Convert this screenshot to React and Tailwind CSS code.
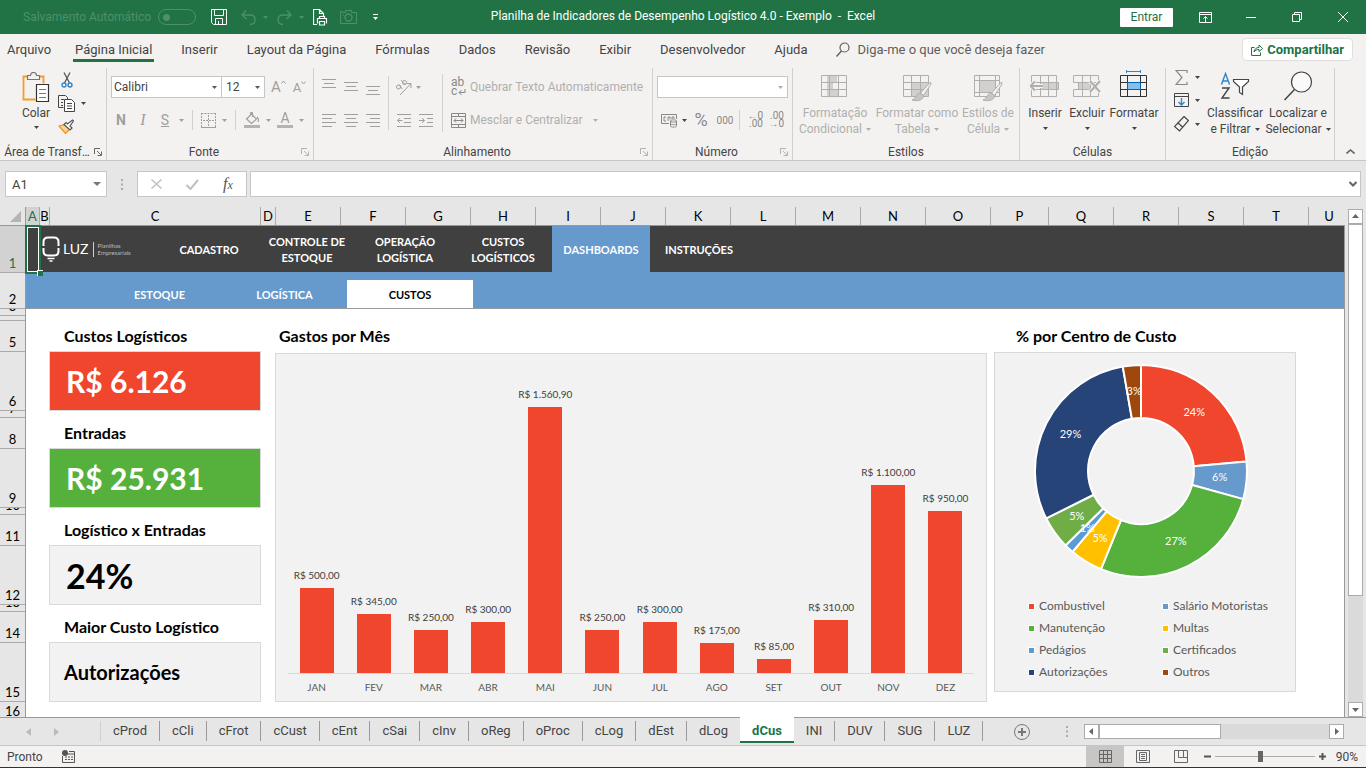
import clsx from 'clsx';

const COLUMNS = [
  { name: 'A', width: 14, active: true },
  { name: 'B', width: 10 },
  { name: 'C', width: 211 },
  { name: 'D', width: 15 },
  { name: 'E', width: 65 },
  { name: 'F', width: 65 },
  { name: 'G', width: 65 },
  { name: 'H', width: 65 },
  { name: 'I', width: 65 },
  { name: 'J', width: 65 },
  { name: 'K', width: 65 },
  { name: 'L', width: 65 },
  { name: 'M', width: 65 },
  { name: 'N', width: 65 },
  { name: 'O', width: 65 },
  { name: 'P', width: 58 },
  { name: 'Q', width: 65 },
  { name: 'R', width: 65 },
  { name: 'S', width: 65 },
  { name: 'T', width: 65 },
];

const ROWS = [
  { name: '1', height: 47, active: true },
  { name: '2', height: 36 },
  { name: '3', height: 7 },
  { name: '', height: 5 },
  { name: '5', height: 31 },
  { name: '6', height: 59 },
  { name: '7', height: 7 },
  { name: '8', height: 31 },
  { name: '9', height: 59 },
  { name: '10', height: 7 },
  { name: '11', height: 31 },
  { name: '12', height: 59 },
  { name: '13', height: 7 },
  { name: '14', height: 31 },
  { name: '15', height: 59 },
];

const MENU = ['Inserir', 'Layout da Página', 'Fórmulas', 'Dados', 'Revisão', 'Exibir', 'Desenvolvedor', 'Ajuda'];

const NAV = ['CADASTRO', 'CONTROLE DE ESTOQUE', 'OPERAÇÃO LOGÍSTICA', 'CUSTOS LOGÍSTICOS', 'DASHBOARDS', 'INSTRUÇÕES'];

const CARDS = [
  { title: 'Custos Logísticos', value: 'R$ 6.126', style: 'bg-[#f0462d] text-white text-[30px] pl-4' },
  { title: 'Entradas', value: 'R$ 25.931', style: 'bg-[#56b03c] text-white text-[30px] pl-4' },
  { title: 'Logístico x Entradas', value: '24%', style: 'bg-[#f2f2f2] text-black text-[34px] pl-4' },
  { title: 'Maior Custo Logístico', value: 'Autorizações', style: 'bg-[#f2f2f2] text-black text-[20px] pl-3.5' },
];

const MONTHS = [
  { month: 'JAN', value: 500 },
  { month: 'FEV', value: 345 },
  { month: 'MAR', value: 250 },
  { month: 'ABR', value: 300 },
  { month: 'MAI', value: 1560.9 },
  { month: 'JUN', value: 250 },
  { month: 'JUL', value: 300 },
  { month: 'AGO', value: 175 },
  { month: 'SET', value: 85 },
  { month: 'OUT', value: 310 },
  { month: 'NOV', value: 1100 },
  { month: 'DEZ', value: 950 },
];
const AXIS_MAX = 1800;

// end = angle in degrees, clockwise from the top
const SLICES = [
  { name: 'Combustível', pct: '24%', color: '#f0462d', end: 84.8 },
  { name: 'Salário Motoristas', pct: '6%', color: '#6699cc', end: 105.4 },
  { name: 'Manutenção', pct: '27%', color: '#56b03c', end: 202.2 },
  { name: 'Multas', pct: '5%', color: '#ffc000', end: 220.3 },
  { name: 'Pedágios', pct: '1%', color: '#5b9bd5', end: 225.4 },
  { name: 'Certificados', pct: '5%', color: '#70ad47', end: 243.4 },
  { name: 'Autorizações', pct: '29%', color: '#264478', end: 350.1 },
  { name: 'Outros', pct: '3%', color: '#9e480e', end: 360 },
];

const SHEETS = ['cProd', 'cCli', 'cFrot', 'cCust', 'cEnt', 'cSai', 'cInv', 'oReg', 'oProc', 'cLog', 'dEst', 'dLog', 'dCus', 'INI', 'DUV', 'SUG', 'LUZ'];

function formatBRL(v) {
  const [int, dec] = v.toFixed(2).split('.');
  return `R$ ${int.replace(/\B(?=(\d{3})+$)/g, '.')},${dec}`;
}

function Svg({ w, h, children, className, stroke = 'currentColor' }) {
  return (
    <svg width={w} height={h} viewBox={`0 0 ${w} ${h}`} fill="none" stroke={stroke} className={clsx('shrink-0', className)} aria-hidden="true">
      {children}
    </svg>
  );
}

function Caret({ className }) {
  return (
    <Svg w={5} h={3} className={className}>
      <path d="M0 0h5L2.500 3z" fill="currentColor" stroke="none" />
    </Svg>
  );
}

function TitleBar() {
  return (
    <header className="flex h-[34px] items-center bg-[#217346] text-white">
      <div className="flex flex-1 items-center">
        <label className="flex items-center pl-[23px] text-xs text-[#4d9069]">
          <span className="w-[135px] whitespace-nowrap">Salvamento Automático</span>
          <input type="checkbox" className="peer sr-only" />
          <span className="flex h-4 w-[38px] items-center rounded-full border border-[#4d9069] pl-1">
            <span className="size-[7px] rounded-full bg-[#4d9069]" />
          </span>
        </label>
        <button aria-label="Salvar" className="ml-[15px]">
          <Svg w={16} h={16}>
            <path d="M.5.5h15v15h-13l-2-2zM3.500.5v6h9v-6M4.500 15.500v-6h7v6M7.500 12v3" />
          </Svg>
        </button>
        <button aria-label="Desfazer" className="ml-[14px] flex items-center gap-[7px] text-[#4d9069]">
          <Svg w={15} h={15}>
            <path d="M5 .5 1 5l4.500 4M1 5h8.500c3 0 4.500 2 4.500 4.500 0 3-2 5-5 5" strokeWidth="1.300" />
          </Svg>
          <Caret />
        </button>
        <button aria-label="Refazer" className="ml-[9px] flex items-center gap-[7px] text-[#4d9069]">
          <Svg w={15} h={15}>
            <path d="m10 .5 4 4.500-4.500 4M14 5H5.500C2.500 5 1 7 1 9.500c0 3 2 5 5 5" strokeWidth="1.300" />
          </Svg>
          <Caret />
        </button>
        <button aria-label="Visualizar impressão" className="ml-[9px]">
          <Svg w={15} h={17}>
            <path d="M4 15.500H.5V.5h6l4 4v3M6.500.5v4h4M6.500 9.500v-2h5v2M4.500 14.500v-5h9v5M6.500 12.500h5v3.500h-5z" strokeWidth="1.200" />
          </Svg>
        </button>
        <button aria-label="Câmera" className="ml-3 text-[#4d9069]">
          <Svg w={17} h={14}>
            <path d="M.5 1.500h2v1h3v-2h6v2h5v11H.5z" />
            <circle cx="8.500" cy="7.500" r="3.500" strokeWidth="1.300" />
            <path d="M2.500 5H4" />
          </Svg>
        </button>
        <button aria-label="Personalizar" className="ml-4">
          <Svg w={5} h={6}>
            <path d="M0 .5h5" />
            <path d="M0 3h5L2.500 6z" fill="currentColor" stroke="none" />
          </Svg>
        </button>
      </div>
      <h1 className="pb-0.5 text-xs whitespace-pre">Planilha de Indicadores de Desempenho Logístico 4.0 - Exemplo  -  Excel</h1>
      <div className="flex flex-1 items-center justify-end">
        <button className="mr-[9px] h-[19px] w-[53px] rounded-[1px] bg-white text-xs text-[#217346]">Entrar</button>
        <button aria-label="Opções de exibição da faixa" className="flex w-[46px] justify-center">
          <Svg w={13} h={11}>
            <path d="M.5.5h12v10H.5zM.5 2.500h12M6.500 10V5M4.500 6.500l2-2 2 2" />
          </Svg>
        </button>
        <button aria-label="Minimizar" className="flex w-[46px] justify-center">
          <Svg w={10} h={1}>
            <path d="M0 .5h10" />
          </Svg>
        </button>
        <button aria-label="Restaurar" className="flex w-[46px] justify-center">
          <Svg w={10} h={10}>
            <path d="M.5 2.500h7v7h-7zM2.500 2.500v-2h7v7h-2" />
          </Svg>
        </button>
        <button aria-label="Fechar" className="flex w-[46px] justify-center">
          <Svg w={10} h={10}>
            <path d="m0 0 10 10M10 0 0 10" />
          </Svg>
        </button>
      </div>
    </header>
  );
}

function MenuBar() {
  return (
    <nav className="flex h-[34px] items-center bg-[#f3f2f1] pb-[3px] pl-[7px] text-[13px] text-[#444]">
      <button>Arquivo</button>
      <button className="ml-[22px] h-[25px] border-y-[3px] border-t-transparent border-b-[#217346] px-0.5">Página Inicial</button>
      <div className="ml-[27px] flex gap-[29px]">
        {MENU.map(item => (
          <button key={item}>{item}</button>
        ))}
      </div>
      <label className="ml-7 flex flex-1 items-center gap-2 text-[#605e5c]">
        <Svg w={14} h={15}>
          <circle cx="8.500" cy="5.500" r="4.500" strokeWidth="1.200" />
          <path d="M5.500 9 .5 14.500" strokeWidth="1.400" />
        </Svg>
        <input placeholder="Diga-me o que você deseja fazer" className="w-56 bg-transparent outline-none placeholder:text-[#605e5c]" />
      </label>
      <button className="mr-[13px] flex h-[23px] items-center gap-1 rounded-sm border border-[#e1dfdd] bg-white px-2 font-bold text-[#217346]">
        <Svg w={12} h={12}>
          <path d="M3.500 3.500h-3v8h9v-3M3 8c.5-3 2-4.500 5-4.500V1l3.500 3.500L8 7.500V5.500C5.500 5.500 4 6.500 3 8z" />
        </Svg>
        Compartilhar
      </button>
    </nav>
  );
}

function Group({ label, launcher, dim, className, children }) {
  return (
    <section className={clsx('flex shrink-0 flex-col border-r border-[#d2d0ce]', className)} aria-label={label}>
      <div className="flex h-[76px] pl-1">{children}</div>
      <div className="flex h-4 items-center text-xs text-[#444]">
        <span className="flex-1 truncate text-center">{label}</span>
        {launcher && (
          <button aria-label={`Opções de ${label}`} className={clsx('w-3', dim ? 'text-[#b5b3b1]' : 'text-[#666]')}>
            <Svg w={8} h={8}>
              <path d="M.5 6V.5H6M3 3l4 4M7.500 3.500v4h-4" />
            </Svg>
          </button>
        )}
      </div>
    </section>
  );
}

function Sep({ className }) {
  return <span className={clsx('w-px shrink-0 bg-[#d2d0ce]', className)} />;
}

// lines: [x1, x2] for each stroke, top: where the first one lies
function Lines({ lines, top = 3 }) {
  return (
    <Svg w={14} h={18} className="mx-1">
      {lines.map(([a, b], i) => (
        <path key={i} d={`M${a} ${i * 4 + top + 0.5}H${b}`} />
      ))}
    </Svg>
  );
}

function BigButton({ icon, lines, caretBelow, className }) {
  return (
    <button className={clsx('flex shrink-0 flex-col items-center pt-0.5', className)}>
      <span className="flex h-[35px] items-start">{icon}</span>
      {lines.map((line, i) => (
        <span key={line} className="flex h-4 items-center gap-1 text-xs whitespace-nowrap">
          {line}
          {!caretBelow && i === lines.length - 1 && <Caret />}
        </span>
      ))}
      {caretBelow && <Caret className="mt-1.5" />}
    </button>
  );
}

function TableIcon({ fills, children, w = 30, h = 32 }) {
  return (
    <Svg w={w} h={h}>
      {fills}
      <path d="M1.500 5.500h25v21h-25zM1.500 12.500h25M1.500 19.500h25M9.500 5.500v21M18.500 5.500v21" />
      {children}
    </Svg>
  );
}

function Brush() {
  return (
    <>
      <path d="m28.500 12 .5 2-7.500 11.500-3-2.500z" fill="#f3f2f1" />
      <path d="M18 23c-4 0-3 5-8 7 6 2 12-.5 11.500-4.500z" fill="#c8c6c4" />
    </>
  );
}

function Ribbon() {
  return (
    <div className="flex h-[92px] overflow-hidden bg-[#f3f2f1] text-[#444]">
      <Group label="Área de Transf…" launcher className="w-[107px]">
        <button className="ml-3.5 flex w-9 flex-col items-center pt-1 text-xs">
          <Svg w={28} h={32}>
            <path d="M8 4.500H1.500v23h12M17 4.500h4.500v7" stroke="#f59d2a" strokeWidth="1.800" />
            <path d="M5.500 7.500v-4h3c0-4 6-4 6 0h3v4z" fill="#f3f2f1" stroke="#777" strokeWidth="1.200" />
            <path d="M14.500 12.500h12v17h-12z" fill="#fff" stroke="#333" strokeWidth="1.200" />
            <path d="M17 17.500h7M17 21.500h7M17 25.500h7" stroke="#777" />
          </Svg>
          <span className="h-[18px] pt-px">Colar</span>
          <Caret className="mt-1" />
        </button>
        <div className="ml-1 flex flex-col items-start gap-[7px] pt-1">
          <button aria-label="Recortar" className="px-[3px]">
            <Svg w={12} h={16}>
              <path d="M3 .5 8.500 11M9 .5 3.500 11" stroke="#555" strokeWidth="1.300" />
              <circle cx="3" cy="13" r="2" stroke="#2e86c8" strokeWidth="1.400" />
              <circle cx="9" cy="13" r="2" stroke="#2e86c8" strokeWidth="1.400" />
            </Svg>
          </button>
          <button aria-label="Copiar" className="flex items-center gap-1.5">
            <Svg w={17} h={17} stroke="#444">
              <path d="M5.500 12.500h-5V.5h7l2 2v2M3 4.500h3M3 7.500h2M3 10.500h2" />
              <path d="M6.500 4.500h7l3 3v9h-10z" fill="#fff" />
              <path d="M9 8.500h5M9 11h5M9 13.500h5" />
            </Svg>
            <Caret />
          </button>
          <button aria-label="Pincel de formatação">
            <Svg w={16} h={15}>
              <path d="m1 7 6-1.500 4.500 5-4 4z" fill="#fbd28f" stroke="#ef8e2c" strokeWidth="1.200" />
              <path d="M6 5.500 12 11l2-2-2-2 3.500-5-1-1L9.500 5 8 3.500z" fill="#fff" stroke="#555" strokeWidth="1.200" />
            </Svg>
          </button>
        </div>
      </Group>

      <Group label="Fonte" launcher dim className="w-[207px]">
        <div className="flex flex-col gap-[11px] pt-2 text-[#a19f9d]">
          <div className="flex h-[22px] items-center">
            <div className="relative flex h-full items-center">
              <select aria-label="Fonte" className="h-full w-[111px] appearance-none border border-[#c8c6c4] bg-white pl-0.5 text-xs text-[#444]">
                <option>Calibri</option>
              </select>
              <Caret className="pointer-events-none absolute right-[5px] text-[#555]" />
            </div>
            <div className="relative flex h-full items-center">
              <select aria-label="Tamanho" className="h-full w-[43px] appearance-none border border-l-0 border-[#c8c6c4] bg-white pl-1 text-xs text-[#444]">
                <option>12</option>
              </select>
              <Caret className="pointer-events-none absolute right-[5px] text-[#555]" />
            </div>
            <button aria-label="Aumentar fonte" className="ml-1.5 flex text-[15px] leading-none">
              A
              <Svg w={5} h={4}>
                <path d="m.5 3.500 2-2.500 2 2.500" />
              </Svg>
            </button>
            <button aria-label="Diminuir fonte" className="ml-[7px] flex text-[13px] leading-none">
              A
              <Svg w={5} h={4}>
                <path d="m.5.5 2 2.500 2-2.500" />
              </Svg>
            </button>
          </div>
          <div className="flex h-[22px] items-center">
            <button className="w-5 text-sm font-bold">N</button>
            <button className="ml-0.5 w-5 font-['Liberation_Serif',serif] text-base italic">I</button>
            <button className="ml-0.5 w-5 text-sm underline">S</button>
            <Caret className="ml-1" />
            <Sep className="mx-2 h-5" />
            <Svg w={15} h={15}>
              <path d="M.5 0v14M14.500 0v14M.5.5h14M7.500 2v11M2 7.500h11" strokeDasharray="2 1" />
              <path d="M0 14.500h15" />
            </Svg>
            <Caret className="ml-1.5" />
            <Sep className="mx-2 h-5" />
            <Svg w={16} h={16}>
              <path d="m2.500 7 5-5 5 5-5 4.500zM6.500 4V1.500c0-1.500 2-1.500 2 0V5M13 5c2 2 1.500 4 1 5" strokeWidth="1.200" />
              <path d="M0 13h16v3H0z" fill="#b5b3b1" stroke="none" />
            </Svg>
            <Caret className="ml-1.5" />
            <button aria-label="Cor da fonte" className="ml-1.5 flex w-4 flex-col items-center text-sm leading-[13px]">
              A<span className="h-[3px] w-4 bg-[#b5b3b1]" />
            </button>
            <Caret className="ml-1.5" />
          </div>
        </div>
      </Group>

      <Group label="Alinhamento" launcher dim className="w-[339px]">
        <div className="flex shrink-0 flex-col gap-[11px] pt-2 text-[#a19f9d]">
          <div className="flex h-[22px] items-center">
            <Lines top={1} lines={[[0, 14], [2, 12], [0, 14]]} />
            <Lines top={4} lines={[[0, 14], [2, 12], [0, 14]]} />
            <Lines top={8} lines={[[0, 14], [2, 12], [0, 14]]} />
          </div>
          <div className="flex h-[22px] items-center">
            <Lines lines={[[0, 14], [0, 10], [0, 14], [0, 10]]} />
            <Lines lines={[[0, 14], [2, 12], [0, 14], [2, 12]]} />
            <Lines lines={[[0, 14], [4, 14], [0, 14], [4, 14]]} />
          </div>
        </div>
        <Sep className="mt-2 ml-1 h-[54px]" />
        <div className="flex w-[53px] shrink-0 flex-col gap-[11px] pt-2 text-[#a19f9d]">
          <button aria-label="Orientação" className="flex h-[22px] items-center gap-1 pl-1.5">
            <Svg w={17} h={17}>
              <path d="M5 16 15.500 5M11.500 4.500h4.500V9" />
              <circle cx="3.500" cy="8" r="2" />
              <path d="M4.500 5.500 7 10M6 1l4.500 5" />
              <circle cx="9.500" cy="3.500" r="2" />
            </Svg>
            <Caret />
          </button>
          <div className="flex h-[22px] items-center gap-2 pl-2">
            <Svg w={14} h={14}>
              <path d="M0 1.500h14M7 5.500h7M7 9.500h7M0 13.500h14M5.500 7.500H.5M3 5 .5 7.500 3 10" />
            </Svg>
            <Svg w={14} h={14}>
              <path d="M0 1.500h14M8 5.500h6M8 9.500h6M0 13.500h14M0 7.500h5.500M3 5l2.500 2.500L3 10" />
            </Svg>
          </div>
        </div>
        <Sep className="mt-1.5 h-[58px]" />
        <div className="flex shrink-0 flex-col gap-[11px] pt-2 pl-2 text-xs whitespace-nowrap text-[#b1afad]">
          <button className="flex h-[22px] items-center gap-1">
            <span className="relative w-[15px] text-left leading-[9px] text-[#8a8886]">
              ab
              <br />c
              <Svg w={8} h={7} className="absolute right-0 bottom-0">
                <path d="M7 0v3.500H1M3.500 1 1 3.500 3.500 6" />
              </Svg>
            </span>
            Quebrar Texto Automaticamente
          </button>
          <button className="flex h-[22px] items-center gap-1">
            <Svg w={15} h={15} stroke="#8a8886">
              <path d="M.5.5h14v14H.5zM.5 3.500h14M.5 11.500h14M7.500.5v3M7.500 11.500v3M3 7.500h9M5 5.500l-2 2 2 2M10 5.500l2 2-2 2" />
            </Svg>
            Mesclar e Centralizar
            <Caret className="ml-1.5" />
          </button>
        </div>
      </Group>

      <Group label="Número" launcher dim className="w-[140px]">
        <div className="flex flex-col gap-[11px] pt-2 text-[#8a8886]">
          <div className="relative flex h-[22px] items-center">
            <select aria-label="Formato de número" className="h-full w-[131px] appearance-none border border-[#c8c6c4] bg-white" />
            <Caret className="pointer-events-none absolute right-[5px] text-[#b1afad]" />
          </div>
          <div className="flex h-[22px] items-center">
            <Svg w={17} h={15} className="ml-1">
              <path d="M8 10.500H.5v-9h15V6M5 4H3v4h2M7 8V4h2v2.500M11 6V4h2v2" />
              <path d="M9.500 8c0-1.500 6-1.500 6 0v5c0 1.500-6 1.500-6 0zM9.500 8c0 1.500 6 1.500 6 0M9.500 10.500c0 1.500 6 1.500 6 0" fill="#f3f2f1" />
            </Svg>
            <Caret className="ml-1 text-[#444]" />
            <button className="ml-1 w-5 text-lg leading-none">%</button>
            <button className="ml-1 w-5 text-[10px]">000</button>
            <Sep className="mx-1 h-5" />
            <button aria-label="Aumentar casas decimais" className="ml-0.5 w-[17px] text-right text-[10px] leading-2">
              ←0
              <br />
              .00
            </button>
            <button aria-label="Diminuir casas decimais" className="ml-1 w-[17px] text-right text-[10px] leading-2">
              .00
              <br />
              →0
            </button>
          </div>
        </div>
      </Group>

      <Group label="Estilos" className="w-[227px]">
        <div className="flex text-[#b1afad]">
          <BigButton
            className="w-[76px]"
            lines={['Formatação', 'Condicional']}
            icon={
              <TableIcon
                fills={<path d="M7 6h10v6H7zM7 13h6v6H7zM7 20h12v6H7z" fill="#d2d0ce" stroke="none" />}
              />
            }
          />
          <BigButton
            className="w-[88px]"
            lines={['Formatar como', 'Tabela']}
            icon={
              <TableIcon fills={<path d="M10 13h16v13H10z" fill="#d2d0ce" stroke="none" />}>
                <Brush />
              </TableIcon>
            }
          />
          <BigButton
            className="w-[54px]"
            lines={['Estilos de', 'Célula']}
            icon={
              <Svg w={30} h={32}>
                <path d="M1.500 5.500h25v21h-25zM1.500 10.500h25M1.500 22.500h25M6.500 5.500v21M22.500 5.500v21" />
                <path d="M7 11h15v11H7z" fill="#d2d0ce" stroke="none" />
                <Brush />
              </Svg>
            }
          />
        </div>
      </Group>

      <Group label="Células" className="w-[146px]">
        <BigButton
          className="w-[42px]"
          caretBelow
          lines={['Inserir']}
          icon={
            <Svg w={30} h={32} stroke="#b1afad">
              <path d="M10 12h18v8H10z" fill="#d2d0ce" stroke="none" />
              <path d="M1.500 12.500v-7h25v21h-25v-7M1.500 12.500h27v7h-27M10.500 5.500v21M18.500 5.500v21" />
              <path d="M13 16H1M5 11.500.5 16 5 20.500" stroke="#f3f2f1" strokeWidth="4" />
              <path d="M13 16H1M5 11.500.5 16 5 20.500" strokeWidth="2" />
            </Svg>
          }
        />
        <BigButton
          className="w-[42px]"
          caretBelow
          lines={['Excluir']}
          icon={
            <Svg w={30} h={32} stroke="#b1afad">
              <path d="M6 12h12v8H6z" fill="#d2d0ce" stroke="none" />
              <path d="M1.500 5.500h25v7h-25zM1.500 19.500h25v7h-25zM6.500 12.500h12v7h-12zM10.500 5.500v21M18.500 5.500v21" />
              <path d="m18 11 10 11M28 11 18 22" stroke="#f3f2f1" strokeWidth="4" />
              <path d="m18 11 10 11M28 11 18 22" strokeWidth="2" />
            </Svg>
          }
        />
        <BigButton
          className="w-[52px]"
          caretBelow
          lines={['Formatar']}
          icon={
            <Svg w={28} h={32} stroke="#333">
              <path d="M8 13h12v7H8z" fill="#83beec" stroke="none" />
              <path d="M.5 5.500h26v21H.5zM.5 12.500h26M.5 19.500h26M7.500 5.500v21M20.500 5.500v21" />
              <path d="M7.500 12.500h13v7h-13z" stroke="#0063b1" />
              <path d="M6.500 1.500h14M6.500 0v3M20.500 0v3" stroke="#2e86c8" />
            </Svg>
          }
        />
      </Group>

      <Group label="Edição" className="w-[169px]">
        <div className="flex w-[34px] shrink-0 flex-col gap-2 pt-0.5 pl-1">
          <button aria-label="AutoSoma" className="flex items-center gap-1.5">
            <Svg w={15} h={15} stroke="#8a8886">
              <path d="M13 3V.5H2L8 7.500l-6 7h11V12" strokeWidth="1.200" />
            </Svg>
            <Caret />
          </button>
          <button aria-label="Preencher" className="flex items-center gap-1.5">
            <Svg w={15} h={15}>
              <path d="M.5.5h14v13H.5zM.5 3.500h14" stroke="#444" />
              <path d="M7.500 5v7M4.500 9l3 3 3-3" stroke="#2e86c8" strokeWidth="1.400" />
            </Svg>
            <Caret />
          </button>
          <button aria-label="Limpar" className="flex items-center gap-1.5">
            <Svg w={15} h={16}>
              <path d="m10 .5 4.500 4-9 10.500-5-4.500zM3.500 6.500l5 4.500" strokeWidth="1.200" />
            </Svg>
            <Caret />
          </button>
        </div>
        <BigButton
          className="w-[62px]"
          lines={['Classificar', 'e Filtrar']}
          icon={
            <Svg w={30} h={31}>
              <path d="M1.500 14.500 5.500 3.500l4 11M3 11h5.500" stroke="#2e86c8" strokeWidth="1.400" />
              <path d="M2 18h7L2 28h7.500" stroke="#444" strokeWidth="1.400" />
              <path d="M13.500 9.500h15v2l-6 5.500v7.500l-3-2v-5.500l-6-5.500z" stroke="#444" strokeWidth="1.200" fill="#fff" />
            </Svg>
          }
        />
        <BigButton
          className="w-[64px]"
          lines={['Localizar e', 'Selecionar']}
          icon={
            <Svg w={30} h={32} stroke="#444">
              <circle cx="18.500" cy="12" r="10" strokeWidth="1.200" fill="#fafafa" />
              <path d="M11.500 19.500 1.500 30" strokeWidth="1.500" />
            </Svg>
          }
        />
      </Group>
      <button aria-label="Recolher a Faixa" className="flex flex-1 items-end justify-center pb-1.5 text-[#666]">
        <Svg w={9} h={5}>
          <path d="M.5 4.500 4.500 1l4 3.500" strokeWidth="1.600" />
        </Svg>
      </button>
    </div>
  );
}

function FormulaBar() {
  return (
    <div className="flex items-center border-t border-[#c6c6c6] px-[5px] py-[10px]">
      <div className="relative flex items-center">
        <input aria-label="Caixa de nome" defaultValue="A1" className="h-[26px] w-[102px] border border-[#c6c6c6] bg-white pl-1.5 text-[13px] text-[#444]" />
        <Svg w={8} h={4} className="absolute right-1.5 text-[#777]">
          <path d="M0 0h8L4 4z" fill="currentColor" stroke="none" />
        </Svg>
      </div>
      <Svg w={2} h={11} className="mx-3.5 text-[#aaa]">
        <path d="M1 0v2M1 4.500v2M1 9v2" strokeWidth="2" />
      </Svg>
      <div className="flex h-[26px] w-[110px] items-center border border-[#c6c6c6] bg-white text-[#c0c0c0]">
        <button aria-label="Cancelar" className="flex flex-1 justify-center">
          <Svg w={11} h={10}>
            <path d="m.5.5 10 9M10.500.5l-10 9" strokeWidth="1.500" />
          </Svg>
        </button>
        <button aria-label="Inserir" className="flex flex-1 justify-center">
          <Svg w={13} h={11}>
            <path d="m.5 6 4 4L12 1" strokeWidth="2" />
          </Svg>
        </button>
        <button className="flex-1 font-['Liberation_Serif',serif] text-base leading-none text-[#555] italic">
          f<span className="text-xs">x</span>
        </button>
      </div>
      <div className="relative ml-[3px] flex flex-1 items-center">
        <input aria-label="Barra de fórmulas" className="h-[26px] w-full border border-[#c6c6c6] bg-white px-1 text-xs" />
        <Svg w={8} h={6} className="absolute right-1 text-[#666]">
          <path d="m.5 1 3.500 3.500L7.500 1" strokeWidth="2" />
        </Svg>
      </div>
    </div>
  );
}

function ColumnHeaders() {
  return (
    <div className="flex h-[19px] border-b border-[#999] font-[Lato,sans-serif] text-[13px] text-black">
      <div className="flex w-[26px] shrink-0 items-end justify-end border-r border-[#999] pr-1 pb-[3px]">
        <Svg w={11} h={11}>
          <path d="M11 0v11H0z" fill="#b4b4b4" stroke="none" />
        </Svg>
      </div>
      {COLUMNS.map(col => (
        <div
          key={col.name}
          className={clsx('flex shrink-0 items-center justify-center border-r border-[#aaa] pt-0.5', col.active && 'bg-[#d2d2d2] text-[#217346]')}
          style={{ width: col.width }}
        >
          {col.name}
        </div>
      ))}
      <div className="flex min-w-0 flex-1 items-center justify-center pt-0.5 pl-1">U</div>
    </div>
  );
}

function RowHeaders() {
  return (
    <div className="flex w-[26px] shrink-0 flex-col border-r border-[#999] font-[Lato,sans-serif] text-[13px] text-black">
      {ROWS.map((row, i) => (
        <div
          key={i}
          className={clsx('flex shrink-0 items-end justify-center overflow-hidden border-b border-[#aaa] leading-[17px]', row.active && 'bg-[#d2d2d2] text-[#217346]')}
          style={{ height: row.height }}
        >
          {row.name}
        </div>
      ))}
      <div className="flex h-[15px] items-end justify-center overflow-hidden leading-3">16</div>
    </div>
  );
}

function SheetNav() {
  return (
    <>
      <div className="flex h-[46px] bg-[#404040]">
        <div className="flex w-[134px] shrink-0 items-center pl-4 text-white">
          <Svg w={18} h={26}>
            <path d="M1.500 10V6c0-3 2-4.500 4.500-4.500h6c2.500 0 4.500 1.500 4.500 4.500v4M1.500 12v3c0 3 1.500 4.500 4.500 4.500h6c3 0 4.500-1.500 4.500-4.500v-3" strokeWidth="2" />
            <path d="M5.500 22.500h7M7.500 25h3" strokeWidth="1.500" />
          </Svg>
          <span className="ml-[3px] text-sm">LUZ</span>
          <Sep className="ml-1 h-[15px] bg-[#888]" />
          <span className="ml-1 text-[6px] leading-[7px] text-[#bbb]">
            Planilhas
            <br />
            Empresariais
          </span>
        </div>
        {NAV.map(item => (
          <button
            key={item}
            className={clsx('w-[98px] shrink-0 px-2 pt-0.5 text-[11px] leading-4 font-bold text-white', item === 'DASHBOARDS' && 'bg-[#6699cc]')}
          >
            {item}
          </button>
        ))}
      </div>
      <div className="flex h-[37px] items-end border-b border-[#999] bg-[#6699cc] pl-[71px] text-[11px] font-bold text-white">
        <button className="h-7 w-[125px] pt-0.5">ESTOQUE</button>
        <button className="h-7 w-[125px] pt-0.5">LOGÍSTICA</button>
        <button className="h-7 w-[126px] bg-white pt-0.5 text-black">CUSTOS</button>
      </div>
    </>
  );
}

function BarChart() {
  return (
    <div className="flex min-w-0 flex-1 flex-col">
      <h2 className="flex h-[33px] items-center pb-0.5 pl-1 text-base font-bold">Gastos por Mês</h2>
      <div className="flex h-[349px] flex-col border border-[#d9d9d9] bg-[#f2f2f2] px-3">
        <div className="flex flex-1 items-end border-b border-[#d9d9d9] pt-3">
          {MONTHS.map(({ month, value }) => (
            <div key={month} className="flex h-full flex-1 flex-col items-center justify-end">
              <span className="mb-[5px] text-[10px] leading-4 whitespace-nowrap text-[#404040]">{formatBRL(value)}</span>
              <div className="w-[34px] shrink-0 bg-[#f0462d]" style={{ height: `${(value / AXIS_MAX) * 100}%` }} />
            </div>
          ))}
        </div>
        <div className="flex h-[27px] items-center pb-px text-[10px] text-[#595959]">
          {MONTHS.map(({ month }) => (
            <span key={month} className="flex-1 text-center">{month}</span>
          ))}
        </div>
      </div>
    </div>
  );
}

function polar(r, deg) {
  const a = ((deg - 90) * Math.PI) / 180;
  return [110 + r * Math.cos(a), 110 + r * Math.sin(a)];
}

function slicePath(from, to) {
  const large = to - from > 180 ? 1 : 0;
  const [x1, y1] = polar(106, from);
  const [x2, y2] = polar(106, to);
  const [x3, y3] = polar(53, to);
  const [x4, y4] = polar(53, from);
  return `M${x1} ${y1}A106 106 0 ${large} 1 ${x2} ${y2}L${x3} ${y3}A53 53 0 ${large} 0 ${x4} ${y4}Z`;
}

function DonutChart() {
  return (
    <div className="flex w-[302px] shrink-0 flex-col">
      <h2 className="flex h-8 items-center pl-[22px] text-base font-bold">% por Centro de Custo</h2>
      <div className="flex h-[340px] flex-col items-center border border-[#d9d9d9] bg-[#f2f2f2] pt-2">
        <svg width="220" height="220" viewBox="0 0 220 220" className="mr-2 shrink-0">
          {SLICES.map((s, i) => (
            <path key={s.name} d={slicePath(i ? SLICES[i - 1].end : 0, s.end)} fill={s.color} stroke="#fff" strokeWidth="2" strokeLinejoin="round" />
          ))}
          {SLICES.map((s, i) => {
            const [x, y] = polar(79, ((i ? SLICES[i - 1].end : 0) + s.end) / 2);
            return (
              <text key={s.name} x={x} y={y + 3} textAnchor="middle" fontSize="11" fill="#fff">
                {s.pct}
              </text>
            );
          })}
        </svg>
        <ul className="mt-3.5 grid w-full grid-cols-[134px_1fr] pl-[33px] text-xs leading-[22px] text-[#595959]">
          {SLICES.map(s => (
            <li key={s.name} className="flex items-center gap-1">
              <span className="size-[7px] border border-white" style={{ backgroundColor: s.color }} />
              {s.name}
            </li>
          ))}
        </ul>
      </div>
    </div>
  );
}

function Sheet() {
  return (
    <div className="relative flex min-w-0 flex-1 flex-col border-r border-[#999] bg-white font-[Lato,sans-serif]">
      <SheetNav />
      <div className="flex pt-[11px] pr-12 pl-[23px]">
        <div className="flex w-[212px] shrink-0 flex-col gap-1.5">
          {CARDS.map(card => (
            <div key={card.title}>
              <h2 className="flex h-[31px] items-center pl-[15px] text-base font-bold">{card.title}</h2>
              <div className={clsx('flex h-[60px] items-center border border-[#d9d9d9] font-bold', card.style)}>{card.value}</div>
            </div>
          ))}
        </div>
        <div className="ml-3.5 flex min-w-0 flex-1">
          <BarChart />
        </div>
        <div className="ml-[7px]">
          <DonutChart />
        </div>
      </div>
      {/* selected cell */}
      <div className="absolute -top-px -left-px h-[49px] w-4 border-2 border-[#217346]">
        <div className="h-full border border-white" />
        <span className="absolute -right-1 -bottom-1 size-1.5 border-t border-l border-white bg-[#217346]" />
      </div>
    </div>
  );
}

function ScrollButton({ label, d }) {
  return (
    <button aria-label={label} className="flex size-[15px] shrink-0 items-center justify-center border border-[#ababab] bg-white text-[#666]">
      <Svg w={7} h={7}>
        <path d={d} fill="currentColor" stroke="none" />
      </Svg>
    </button>
  );
}

function SheetTabs() {
  return (
    <div className="flex h-7 border-t border-[#999] text-[13px] text-[#444]">
      <div className="flex w-[100px] shrink-0 items-center gap-[22px] pl-[26px] text-[#bbb]">
        <Svg w={6} h={8}>
          <path d="M5 0v8L0 4z" fill="currentColor" stroke="none" />
        </Svg>
        <Svg w={6} h={8}>
          <path d="M0 0v8l5-4z" fill="currentColor" stroke="none" />
        </Svg>
      </div>
      <Sep className="mt-[3px] h-5 bg-[#999]" />
      {SHEETS.map(name =>
        name === 'dCus' ? (
          <button key={name} className="-mt-px -ml-px h-[26px] border-b-2 border-[#217346] bg-white px-3 pt-1 font-bold text-[#217346]">{name}</button>
        ) : (
          <button key={name} className="mt-[3px] h-5 border-r border-[#999] px-3">{name}</button>
        )
      )}
      <button aria-label="Nova planilha" className="ml-[31px] self-center text-[#777]">
        <Svg w={16} h={16}>
          <circle cx="8" cy="8" r="7.500" />
          <path d="M4 8h8M8 4v8" strokeWidth="2" />
        </Svg>
      </button>
      <div className="flex-1" />
      <Svg w={2} h={11} className="mr-4 self-center text-[#aaa]">
        <path d="M1 0v2M1 4.500v2M1 9v2" strokeWidth="2" />
      </Svg>
      <div className="mr-[22px] flex w-[260px] shrink-0 items-center">
        <ScrollButton label="Rolar para a esquerda" d="M5 0v7L1 3.500z" />
        <div className="flex-1 bg-[#dadada]">
          <div className="h-[15px] w-[122px] border border-[#ababab] bg-white" />
        </div>
        <ScrollButton label="Rolar para a direita" d="M2 0v7l4-3.500z" />
      </div>
    </div>
  );
}

function StatusBar() {
  return (
    <footer className="flex h-[22px] items-center border-t border-[#c6c6c6] bg-[#f3f2f1] text-xs text-[#444]">
      <span className="w-[62px] pl-[7px]">Pronto</span>
      <Svg w={13} h={13} className="text-[#555]">
        <path d="M.5 6v6.500h12v-11H7M.5 4h12" />
        <circle cx="3" cy="3" r="3" fill="currentColor" stroke="none" />
        <path d="M3 7h8M3 9.500h8" strokeDasharray="2 1" />
      </Svg>
      <div className="flex-1" />
      <button aria-label="Normal" className="flex h-full w-[38px] items-center justify-center bg-[#c8c6c4]">
        <Svg w={13} h={13} stroke="#666">
          <path d="M.5.5h12v12H.5zM.5 4.500h12M.5 8.500h12M4.500.5v12M8.500.5v12" />
        </Svg>
      </button>
      <button aria-label="Layout da Página" className="flex w-[38px] justify-center">
        <Svg w={14} h={13} stroke="#666">
          <path d="M.5.5h13v12H.5zM3.500 2.500h7v8h-7zM5 4.500h4M5 6.500h4M5 8.500h4" />
        </Svg>
      </button>
      <button aria-label="Quebra de Página" className="flex w-[38px] justify-center">
        <Svg w={14} h={13} stroke="#666">
          <path d="M.5.5h13v12H.5zM4.500.5v7h5v-7M9.500 7.500h4" />
        </Svg>
      </button>
      <button aria-label="Menos zoom" className="ml-1">
        <Svg w={7} h={7} stroke="#555">
          <path d="M0 3.500h7" strokeWidth="2" />
        </Svg>
      </button>
      <input
        type="range"
        aria-label="Zoom"
        min="10"
        max="190"
        defaultValue="92"
        className="mx-1 h-3 w-[100px] appearance-none bg-transparent [&::-webkit-slider-runnable-track]:h-px [&::-webkit-slider-runnable-track]:bg-[#aaa] [&::-webkit-slider-thumb]:-mt-[5px] [&::-webkit-slider-thumb]:h-[11px] [&::-webkit-slider-thumb]:w-[5px] [&::-webkit-slider-thumb]:appearance-none [&::-webkit-slider-thumb]:bg-[#666]"
      />
      <button aria-label="Mais zoom">
        <Svg w={7} h={7} stroke="#555">
          <path d="M0 3.500h7M3.500 0v7" strokeWidth="2" />
        </Svg>
      </button>
      <span className="w-10 pr-2 text-right">90%</span>
    </footer>
  );
}

export default function App() {
  return (
    <div className="flex min-h-screen flex-col overflow-hidden bg-[#e6e6e6] font-[Roboto,sans-serif]">
      <TitleBar />
      <MenuBar />
      <Ribbon />
      <FormulaBar />
      <div className="flex">
        <div className="min-w-0 flex-1">
          <ColumnHeaders />
          <div className="flex">
            <RowHeaders />
            <Sheet />
          </div>
        </div>
        <div className="flex w-[21px] shrink-0 flex-col items-center pt-0.5">
          <ScrollButton label="Rolar para cima" d="M0 5h7L3.500 1z" />
          <div className="w-[15px] flex-1 bg-[#dadada]">
            <div className="h-[372px] border border-[#ababab] bg-white" />
          </div>
          <ScrollButton label="Rolar para baixo" d="M0 2h7L3.500 6z" />
        </div>
      </div>
      <SheetTabs />
      <StatusBar />
      <div className="h-px flex-1 bg-[#333]" />
    </div>
  );
}
